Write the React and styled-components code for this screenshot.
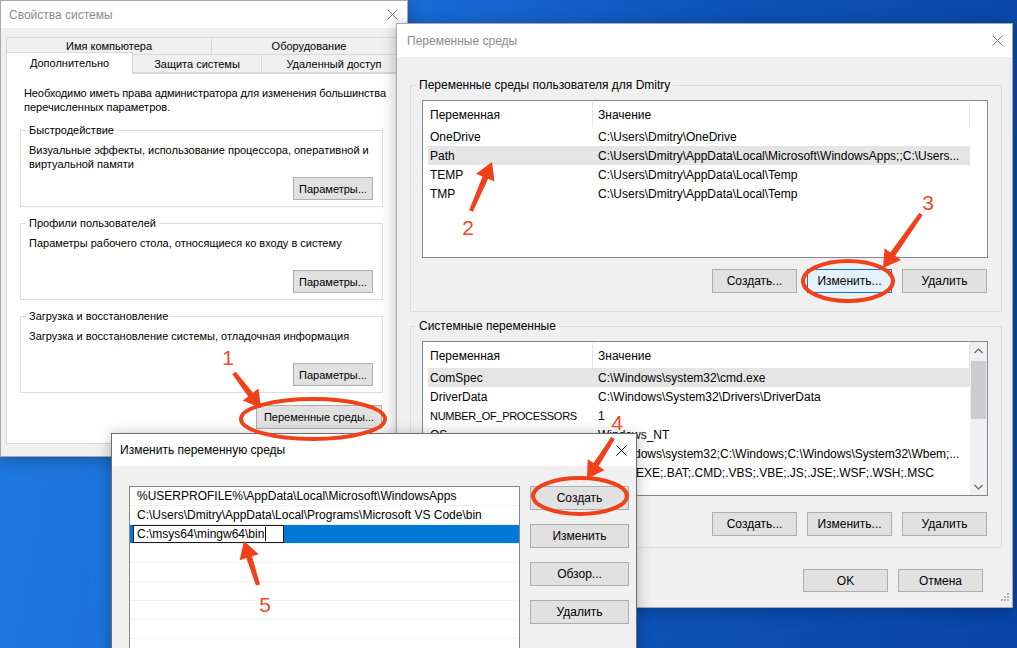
import React from 'react';
import styled, { createGlobalStyle, css } from 'styled-components';

const GlobalStyle = createGlobalStyle`
  html, body { margin: 0; padding: 0; }
  body {
    font-family: "Liberation Sans", Arial, sans-serif;
    font-size: 12px;
    color: #000;
    overflow: hidden;
  }
  * { box-sizing: border-box; }
`;

const Desktop = styled.div`
  position: relative;
  width: 1017px;
  height: 648px;
  overflow: hidden;
  background: linear-gradient(100deg, #1f7ae0 0%, #1a6cd6 35%, #0d52b8 65%, #0844a6 100%);
`;

const Window = styled.section`
  position: absolute;
  left: ${(p) => p.$x}px;
  top: ${(p) => p.$y}px;
  width: ${(p) => p.$w}px;
  height: ${(p) => p.$h}px;
  z-index: ${(p) => p.$z};
  font-size: ${(p) => p.$fs || 12}px;
  background: #f0f0f0;
  border: 1px solid ${(p) => (p.$active ? '#6d6d6d' : '#aaaaaa')};
  box-shadow: 0 2px 14px rgba(0, 0, 0, 0.28);
  display: flex;
  flex-direction: column;
`;

const TitleBar = styled.header`
  flex: none;
  height: ${(p) => p.$h}px;
  background: #fff;
  display: flex;
  align-items: center;
  justify-content: space-between;
  padding-left: ${(p) => p.$pad}px;
  color: ${(p) => (p.$active ? '#000' : '#8c8c8c')};
  font-size: 12px;
`;

const CloseBox = styled.span`
  width: 30px;
  height: 100%;
  display: flex;
  align-items: center;
  justify-content: center;
`;

const CloseIcon = ({ active }) => (
  <svg width="11" height="11" viewBox="0 0 11 11">
    <path d="M0.5 0.5 L10.5 10.5 M10.5 0.5 L0.5 10.5" stroke={active ? '#111' : '#777'} strokeWidth="1" fill="none" />
  </svg>
);

/* ---------- generic controls ---------- */

const Button = styled.button`
  font: inherit;
  color: #000;
  width: ${(p) => p.$w}px;
  height: ${(p) => p.$h || 23}px;
  flex: none;
  padding: 0;
  background: #e1e1e1;
  border: 1px solid #adadad;
  display: flex;
  align-items: center;
  justify-content: center;
  white-space: nowrap;
  ${(p) =>
    p.$focus &&
    css`
      background: #e5f1fb;
      border-color: #0078d7;
    `}
`;

const GroupBox = styled.fieldset`
  width: ${(p) => p.$w}px;
  margin: ${(p) => p.$mt || 0}px 0 0 0;
  padding: ${(p) => p.$pt}px 0 ${(p) => p.$pb}px 0;
  border: 1px solid #dcdcdc;
  min-width: 0;
  flex: none;
`;

const Legend = styled.legend`
  margin-left: 5px;
  padding: 0 3px;
  line-height: 14px;
  color: #000;
`;

const GroupContent = styled.div`
  padding: 0 ${(p) => p.$pr}px 0 ${(p) => p.$pl}px;
  display: flex;
  flex-direction: column;
  justify-content: space-between;
  height: ${(p) => (p.$h ? `${p.$h}px` : 'auto')};
`;

const RightAlign = styled.div`
  display: flex;
  justify-content: flex-end;
  margin-top: ${(p) => p.$mt || 0}px;
  padding-right: ${(p) => p.$pr || 0}px;
  gap: ${(p) => p.$gap || 0}px;
  width: ${(p) => (p.$w ? `${p.$w}px` : 'auto')};
`;

/* ---------- System properties dialog ---------- */

const LeftBody = styled.div`
  flex: 1;
  padding: 10px 0 0 5px;
  display: flex;
  flex-direction: column;
`;

const TabRow = styled.div`
  display: flex;
  align-items: flex-end;
  height: ${(p) => p.$h}px;
  flex: none;
`;

const Tab = styled.div`
  position: relative;
  width: ${(p) => (p.$w ? `${p.$w}px` : 'auto')};
  flex: ${(p) => (p.$w ? 'none' : 1)};
  height: ${(p) => (p.$selected ? p.$h + 3 : p.$h)}px;
  margin-left: -1px;
  margin-bottom: ${(p) => (p.$selected ? -1 : 0)}px;
  z-index: ${(p) => (p.$selected ? 2 : 1)};
  background: ${(p) => (p.$selected ? '#fff' : '#f0f0f0')};
  border: 1px solid #d9d9d9;
  border-bottom: ${(p) => (p.$selected ? 'none' : '1px solid #d9d9d9')};
  display: flex;
  align-items: center;
  justify-content: center;
  white-space: nowrap;
  padding-bottom: ${(p) => (p.$selected ? 2 : 0)}px;
  &:first-child { margin-left: 0; }
`;

const TabPanel = styled.div`
  flex: none;
  height: 371px;
  background: #fff;
  border: 1px solid #d9d9d9;
  padding: 12px 0 0 13px;
  display: flex;
  flex-direction: column;
`;

const Para = styled.p`
  margin: 0 0 0 ${(p) => p.$ml || 0}px;
  line-height: 14px;
  white-space: nowrap;
  letter-spacing: ${(p) => p.$ls || 0}px;
`;

const Section = ({ title, lines }) => (
  <GroupBox $w={363} $mt={9} $pt={6} $pb={6}>
    <Legend>{title}</Legend>
    <GroupContent $pl={8} $pr={9} $h={57}>
      <div>
        {lines.map((l) => (
          <Para key={l}>{l}</Para>
        ))}
      </div>
      <RightAlign>
        <Button $w={80}>Параметры...</Button>
      </RightAlign>
    </GroupContent>
  </GroupBox>
);

const SystemProps = () => (
  <Window $x={0} $y={0} $w={408} $h={457} $z={1} $fs={11}>
    <TitleBar $h={27} $pad={8}>
      Свойства системы
      <CloseBox>
        <CloseIcon />
      </CloseBox>
    </TitleBar>
    <LeftBody>
      <TabRow $h={17}>
        <Tab $w={206} $h={18}>Имя компьютера</Tab>
        <Tab $h={18}>Оборудование</Tab>
      </TabRow>
      <TabRow $h={18}>
        <Tab $w={127} $h={19} $selected>Дополнительно</Tab>
        <Tab $w={130} $h={19}>Защита системы</Tab>
        <Tab $h={19}>Удаленный доступ</Tab>
      </TabRow>
      <TabPanel>
        <Para $ml={4} $ls={-0.1}>Необходимо иметь права администратора для изменения большинства</Para>
        <Para $ml={4}>перечисленных параметров.</Para>
        <Section
          title="Быстродействие"
          lines={['Визуальные эффекты, использование процессора, оперативной и', 'виртуальной памяти']}
        />
        <Section title="Профили пользователей" lines={['Параметры рабочего стола, относящиеся ко входу в систему']} />
        <Section
          title="Загрузка и восстановление"
          lines={['Загрузка и восстановление системы, отладочная информация']}
        />
        <RightAlign $mt={12} $w={362}>
          <Button $w={126} $h={24}>Переменные среды...</Button>
        </RightAlign>
      </TabPanel>
    </LeftBody>
  </Window>
);

/* ---------- Environment variables dialog ---------- */

const RightBody = styled.div`
  flex: 1;
  padding: 21px 10px 0 13px;
  display: flex;
  flex-direction: column;
`;

const ListView = styled.div`
  height: ${(p) => p.$h}px;
  background: #fff;
  border: 1px solid #828790;
  display: flex;
  overflow: hidden;
`;

const ListMain = styled.div`
  width: 547px;
  flex: none;
  display: flex;
  flex-direction: column;
`;

const HeaderRow = styled.div`
  display: flex;
  height: 26px;
  flex: none;
  padding-top: 1px;
`;

const HeaderCell = styled.div`
  width: ${(p) => p.$w}px;
  flex: none;
  padding-left: ${(p) => p.$pl}px;
  border-right: 1px solid #e5e5e5;
  display: flex;
  align-items: center;
`;

const VarRow = styled.div`
  display: flex;
  height: 19px;
  margin-left: 5px;
  align-items: center;
  white-space: nowrap;
  background: ${(p) => (p.$selected ? '#e5e5e5' : 'transparent')};
`;

const VarName = styled.span`
  width: 164px;
  flex: none;
  padding-left: 2px;
  overflow: hidden;
  ${(p) =>
    p.$narrow &&
    css`
      font-size: 11px;
      letter-spacing: -0.3px;
    `}
`;

const VarValue = styled.span`
  flex: 1;
  padding-left: 6px;
  overflow: hidden;
`;

const ScrollBar = styled.div`
  width: 17px;
  flex: none;
  margin-left: auto;
  background: #f0f0f0;
  display: flex;
  flex-direction: column;
`;

const ScrollArrow = styled.div`
  height: 17px;
  flex: none;
  display: flex;
  align-items: center;
  justify-content: center;
  margin-top: ${(p) => (p.$bottom ? 'auto' : 0)};
`;

const Thumb = styled.div`
  height: 58px;
  margin: 2px 1px 0;
  background: #cdcdcd;
`;

const Chevron = ({ down }) => (
  <svg width="9" height="6" viewBox="0 0 9 6">
    <polyline
      points={down ? '0.5,1 4.5,5 8.5,1' : '0.5,5 4.5,1 8.5,5'}
      fill="none"
      stroke="#606060"
      strokeWidth="1.2"
    />
  </svg>
);

const Grip = styled.div`
  position: absolute;
  right: 2px;
  bottom: 2px;
`;

const userVars = [
  ['OneDrive', 'C:\\Users\\Dmitry\\OneDrive'],
  ['Path', 'C:\\Users\\Dmitry\\AppData\\Local\\Microsoft\\WindowsApps;;C:\\Users...', true],
  ['TEMP', 'C:\\Users\\Dmitry\\AppData\\Local\\Temp'],
  ['TMP', 'C:\\Users\\Dmitry\\AppData\\Local\\Temp'],
];

const sysVars = [
  ['ComSpec', 'C:\\Windows\\system32\\cmd.exe', true],
  ['DriverData', 'C:\\Windows\\System32\\Drivers\\DriverData'],
  ['NUMBER_OF_PROCESSORS', '1', false, true],
  ['OS', 'Windows_NT'],
  ['Path', 'C:\\Windows\\system32;C:\\Windows;C:\\Windows\\System32\\Wbem;...'],
  ['PATHEXT', '.COM;.EXE;.BAT;.CMD;.VBS;.VBE;.JS;.JSE;.WSF;.WSH;.MSC'],
];

const VarList = ({ rows, h, scroll }) => (
  <ListView $h={h}>
    <ListMain>
      <HeaderRow>
        <HeaderCell $w={170} $pl={7}>Переменная</HeaderCell>
        <HeaderCell $w={377} $pl={5}>Значение</HeaderCell>
      </HeaderRow>
      {rows.map(([n, v, sel, narrow]) => (
        <VarRow key={n} $selected={sel}>
          <VarName $narrow={narrow}>{n}</VarName>
          <VarValue>{v}</VarValue>
        </VarRow>
      ))}
    </ListMain>
    {scroll && (
      <ScrollBar>
        <ScrollArrow>
          <Chevron />
        </ScrollArrow>
        <Thumb />
        <ScrollArrow $bottom>
          <Chevron down />
        </ScrollArrow>
      </ScrollBar>
    )}
  </ListView>
);

const EnvVars = () => (
  <Window $x={396} $y={23} $w={617} $h={585} $z={2}>
    <TitleBar $h={33} $pad={10}>
      Переменные среды
      <CloseBox>
        <CloseIcon />
      </CloseBox>
    </TitleBar>
    <RightBody>
      <GroupBox $w={592} $pt={8} $pb={18}>
        <Legend>Переменные среды пользователя для Dmitry</Legend>
        <GroupContent $pl={11} $pr={13}>
          <VarList rows={userVars} h={158} />
          <RightAlign $mt={11} $gap={10} $pr={1}>
            <Button $w={85} $h={24}>Создать...</Button>
            <Button $w={85} $h={24} $focus>Изменить...</Button>
            <Button $w={85} $h={24}>Удалить</Button>
          </RightAlign>
        </GroupContent>
      </GroupBox>
      <GroupBox $w={592} $mt={7} $pt={8} $pb={11}>
        <Legend>Системные переменные</Legend>
        <GroupContent $pl={11} $pr={13}>
          <VarList rows={sysVars} h={155} scroll />
          <RightAlign $mt={16} $gap={10} $pr={1}>
            <Button $w={85} $h={24}>Создать...</Button>
            <Button $w={85} $h={24}>Изменить...</Button>
            <Button $w={85} $h={24}>Удалить</Button>
          </RightAlign>
        </GroupContent>
      </GroupBox>
      <RightAlign $mt={21} $gap={10} $pr={19}>
        <Button $w={85}>OK</Button>
        <Button $w={85}>Отмена</Button>
      </RightAlign>
    </RightBody>
    <Grip>
      <svg width="10" height="10" viewBox="0 0 10 10" fill="#b0b0b0">
        <rect x="7" y="1" width="2" height="2" />
        <rect x="4" y="4" width="2" height="2" />
        <rect x="7" y="4" width="2" height="2" />
        <rect x="1" y="7" width="2" height="2" />
        <rect x="4" y="7" width="2" height="2" />
        <rect x="7" y="7" width="2" height="2" />
      </svg>
    </Grip>
  </Window>
);

/* ---------- Edit variable dialog ---------- */

const EditBody = styled.div`
  flex: 1;
  padding: 20px 0 0 17px;
  display: flex;
  align-items: flex-start;
`;

const PathList = styled.div`
  width: 391px;
  height: 200px;
  flex: none;
  background: #fff;
  border: 1px solid #828790;
`;

const PathRow = styled.div`
  height: 19px;
  border-bottom: 1px solid #f0f0f0;
  padding-left: ${(p) => (p.$selected ? 3 : 7)}px;
  display: flex;
  align-items: center;
  white-space: nowrap;
  background: ${(p) => (p.$selected ? '#0078d7' : '#fff')};
`;

const EditField = styled.div`
  width: 151px;
  height: 18px;
  background: #fff;
  border: 1px solid #1a1a1a;
  padding-left: 3px;
  display: flex;
  align-items: center;
`;

const Caret = styled.span`
  width: 1px;
  height: 14px;
  margin-left: 1px;
  background: #000;
`;

const ButtonColumn = styled.div`
  margin-left: 10px;
  display: flex;
  flex-direction: column;
  gap: 14px;
`;

const EditVar = () => (
  <Window $x={111} $y={433} $w={526} $h={240} $z={3} $active>
    <TitleBar $h={32} $pad={8} $active>
      Изменить переменную среды
      <CloseBox>
        <CloseIcon active />
      </CloseBox>
    </TitleBar>
    <EditBody>
      <PathList>
        <PathRow>%USERPROFILE%\AppData\Local\Microsoft\WindowsApps</PathRow>
        <PathRow>C:\Users\Dmitry\AppData\Local\Programs\Microsoft VS Code\bin</PathRow>
        <PathRow $selected>
          <EditField>
            C:\msys64\mingw64\bin
            <Caret />
          </EditField>
        </PathRow>
        <PathRow />
        <PathRow />
        <PathRow />
        <PathRow />
        <PathRow />
        <PathRow />
      </PathList>
      <ButtonColumn>
        <Button $w={99} $h={24}>Создать</Button>
        <Button $w={99} $h={24}>Изменить</Button>
        <Button $w={99} $h={24}>Обзор...</Button>
        <Button $w={99} $h={24}>Удалить</Button>
      </ButtonColumn>
    </EditBody>
  </Window>
);

/* ---------- Annotations overlay ---------- */

const Overlay = styled.svg`
  position: absolute;
  left: 0;
  top: 0;
  z-index: 10;
  pointer-events: none;
`;

const Callout = styled.span`
  position: absolute;
  z-index: 11;
  transform: translate(-50%, -50%);
  font-family: "Liberation Sans", Arial, sans-serif;
  font-size: 21px;
  line-height: 1;
  color: #ef4a2c;
`;

const RED = '#f0411a';

function arrowPoints(x1, y1, x2, y2, w = 6, L = 17, H = 10) {
  const dx = x2 - x1;
  const dy = y2 - y1;
  const len = Math.hypot(dx, dy);
  const ux = dx / len;
  const uy = dy / len;
  const nx = -uy;
  const ny = ux;
  const bx = x2 - ux * L;
  const by = y2 - uy * L;
  const t = w * 0.35;
  const h = w / 2;
  const pts = [
    [x1 + nx * t, y1 + ny * t],
    [bx + nx * h, by + ny * h],
    [bx + nx * H, by + ny * H],
    [x2, y2],
    [bx - nx * H, by - ny * H],
    [bx - nx * h, by - ny * h],
    [x1 - nx * t, y1 - ny * t],
  ];
  return pts.map((q) => q.map((v) => v.toFixed(1)).join(',')).join(' ');
}

const arrows = [
  [234, 373, 261, 408],
  [471, 211, 492, 162],
  [921, 214, 883, 268],
  [613, 438, 587, 479],
  [258, 585, 244, 541],
];

const ellipses = [
  [313, 419, 72, 20],
  [848, 281, 45, 20],
  [580, 496, 47, 18],
];

const callouts = [
  ['1', 228, 357],
  ['2', 468, 227],
  ['3', 928, 202],
  ['4', 617, 422],
  ['5', 265, 604],
];

const Annotations = () => (
  <>
    <Overlay width="1017" height="648" viewBox="0 0 1017 648">
      {ellipses.map(([cx, cy, rx, ry]) => (
        <ellipse key={cx} cx={cx} cy={cy} rx={rx} ry={ry} fill="none" stroke={RED} strokeWidth="4" />
      ))}
      {arrows.map(([a, b, c, d]) => (
        <polygon key={a} points={arrowPoints(a, b, c, d)} fill={RED} />
      ))}
    </Overlay>
    {callouts.map(([t, x, y]) => (
      <Callout key={t} style={{ left: x, top: y }}>
        {t}
      </Callout>
    ))}
  </>
);

export default function App() {
  return (
    <>
      <GlobalStyle />
      <Desktop>
        <SystemProps />
        <EnvVars />
        <EditVar />
        <Annotations />
      </Desktop>
    </>
  );
}
